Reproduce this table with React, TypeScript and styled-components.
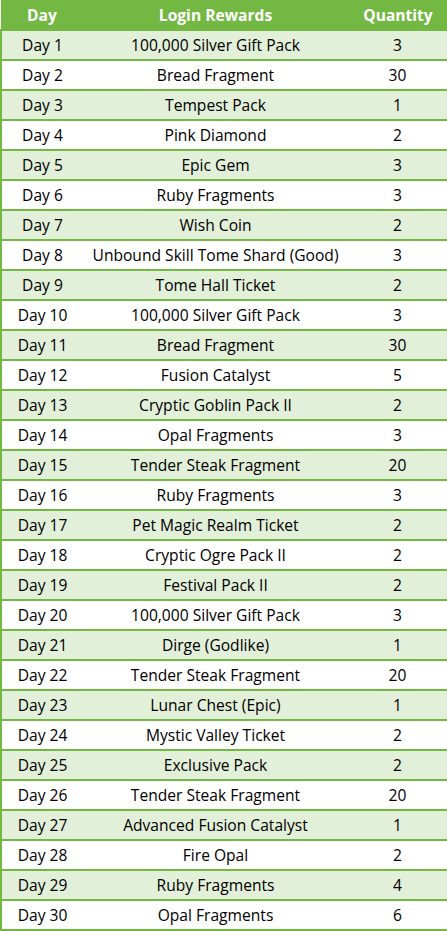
import * as React from "react";
import styled, {createGlobalStyle} from "styled-components";

const GlobalStyle = createGlobalStyle`
    html, body {
        margin: 0;
        padding: 0;
        background: #ffffff;
    }
`;

const green = "#72b843";

const rewards: [string, string][] = [
    ["100,000 Silver Gift Pack", "3"],
    ["Bread Fragment", "30"],
    ["Tempest Pack", "1"],
    ["Pink Diamond", "2"],
    ["Epic Gem", "3"],
    ["Ruby Fragments", "3"],
    ["Wish Coin", "2"],
    ["Unbound Skill Tome Shard (Good)", "3"],
    ["Tome Hall Ticket", "2"],
    ["100,000 Silver Gift Pack", "3"],
    ["Bread Fragment", "30"],
    ["Fusion Catalyst", "5"],
    ["Cryptic Goblin Pack II", "2"],
    ["Opal Fragments", "3"],
    ["Tender Steak Fragment", "20"],
    ["Ruby Fragments", "3"],
    ["Pet Magic Realm Ticket", "2"],
    ["Cryptic Ogre Pack II", "2"],
    ["Festival Pack II", "2"],
    ["100,000 Silver Gift Pack", "3"],
    ["Dirge (Godlike)", "1"],
    ["Tender Steak Fragment", "20"],
    ["Lunar Chest (Epic)", "1"],
    ["Mystic Valley Ticket", "2"],
    ["Exclusive Pack", "2"],
    ["Tender Steak Fragment", "20"],
    ["Advanced Fusion Catalyst", "1"],
    ["Fire Opal", "2"],
    ["Ruby Fragments", "4"],
    ["Opal Fragments", "6"],
];

const RewardsTable = styled.table`
    width: 447px;
    border-collapse: collapse;
    table-layout: fixed;
    font-family: "Open Sans", "Noto Sans", sans-serif;
    font-size: 15.6px;
    color: #000000;
`;

const HeadCell = styled.th`
    height: 29px;
    padding: 0;
    background: ${green};
    color: #ffffff;
    font-weight: 700;
    text-align: center;
    vertical-align: middle;
`;

const Row = styled.tr<{ $shaded: boolean }>`
    background: ${p => p.$shaded ? "#e2efd9" : "#ffffff"};
    border-top: 2px solid ${green};
    border-left: 2px solid ${green};
    border-right: 2px solid ${green};

    &:last-child {
        border-bottom: 2px solid ${green};
    }
`;

const Cell = styled.td`
    height: 28px;
    padding: 0;
    text-align: center;
    vertical-align: middle;
    white-space: nowrap;
`;

export default function App() {
    return (
        <>
            <GlobalStyle/>
            <RewardsTable>
                <colgroup>
                    <col style={{width: 82}}/>
                    <col style={{width: 265}}/>
                    <col style={{width: 100}}/>
                </colgroup>
                <thead>
                <tr>
                    <HeadCell>Day</HeadCell>
                    <HeadCell>Login Rewards</HeadCell>
                    <HeadCell>Quantity</HeadCell>
                </tr>
                </thead>
                <tbody>
                {rewards.map(([name, qty], i) => (
                    <Row key={i} $shaded={i % 2 === 0}>
                        <Cell>Day {i + 1}</Cell>
                        <Cell>{name}</Cell>
                        <Cell>{qty}</Cell>
                    </Row>
                ))}
                </tbody>
            </RewardsTable>
        </>
    );
}
